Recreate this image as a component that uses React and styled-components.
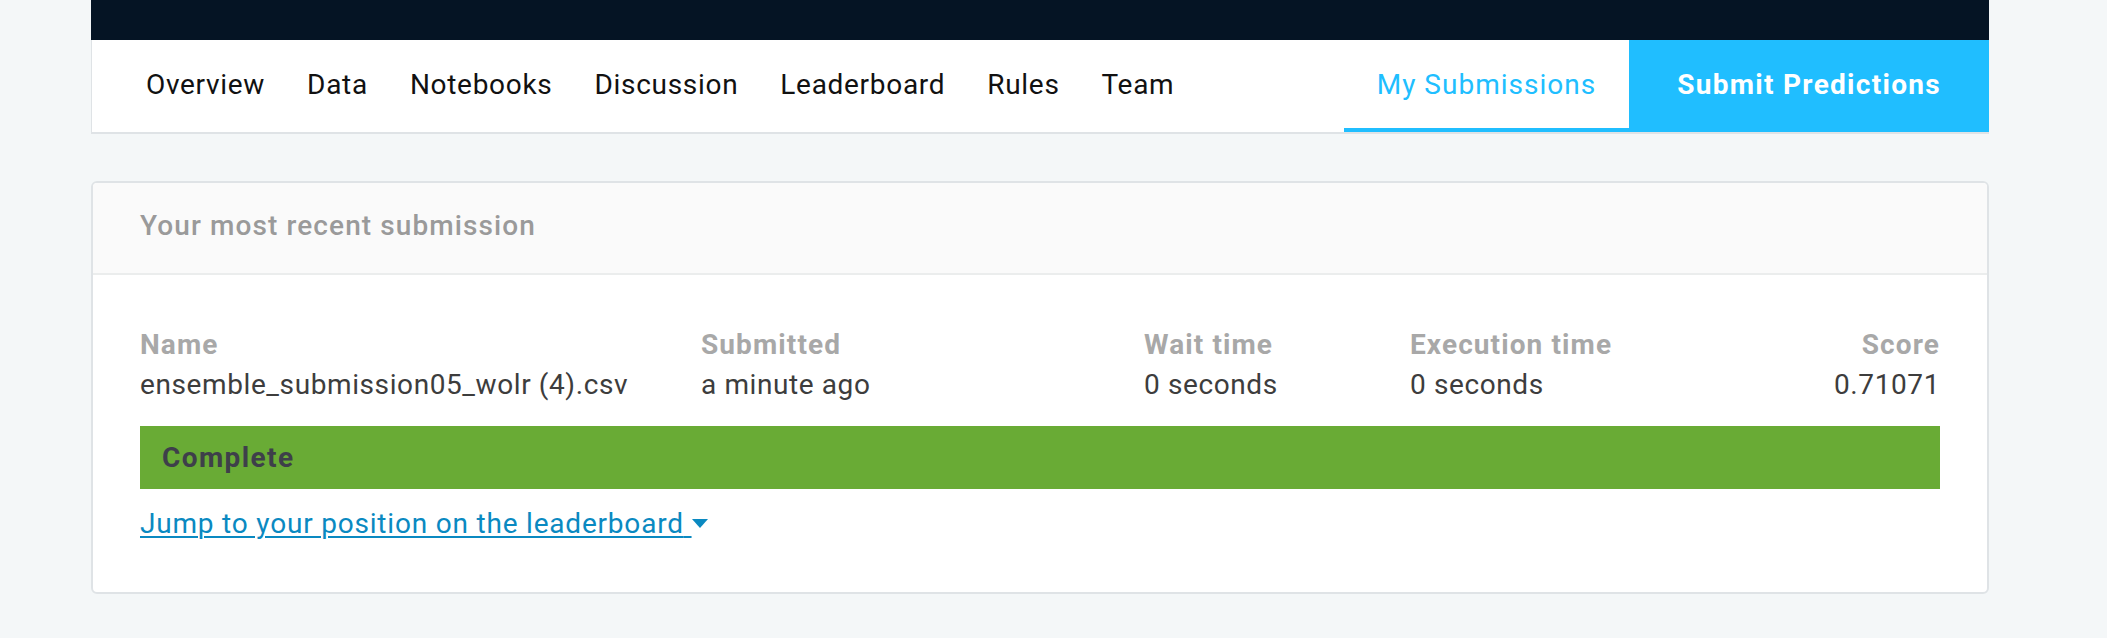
import React from 'react';
import styled, { createGlobalStyle } from 'styled-components';

const GlobalStyle = createGlobalStyle`
  body {
    margin: 0;
    background: #f4f7f8;
    font-family: Roboto, "Liberation Sans", sans-serif;
  }
`;

const Page = styled.div`
  margin-left: 91px;
  width: 1898px;
`;

const TopBar = styled.div`
  height: 40px;
  background: #051424;
`;

const Nav = styled.nav`
  display: flex;
  align-items: stretch;
  height: 94px;
  background: #fff;
  border-left: 1px solid #dfe3e6;
  border-bottom: 2px solid #dfe3e6;
  box-sizing: border-box;
  padding-left: 33px;
`;

const NavItem = styled.a`
  display: flex;
  align-items: center;
  padding: 0 21px 3px;
  font-size: 28px;
  letter-spacing: 0.7px;
  color: #111;
  text-decoration: none;
`;

const Spacer = styled.div`
  flex: 1;
`;

const Tab = styled.a`
  display: flex;
  align-items: center;
  padding: 0 33px;
  font-size: 28px;
  letter-spacing: 1px;
  color: #20beff;
  border-bottom: 4px solid #20beff;
  text-decoration: none;
`;

const SubmitButton = styled.a`
  display: flex;
  align-items: center;
  padding: 0 48px 3px;
  background: #20beff;
  color: #fff;
  font-size: 28px;
  font-weight: 700;
  letter-spacing: 1.3px;
  text-decoration: none;
`;

const Card = styled.section`
  margin-top: 47px;
  background: #fff;
  border: 2px solid #dfe3e6;
  border-radius: 6px;
  overflow: hidden;
`;

const CardHeader = styled.header`
  height: 92px;
  box-sizing: border-box;
  display: flex;
  align-items: center;
  padding: 0 47px 5px;
  background: #fafafa;
  border-bottom: 2px solid #ebeded;
  font-size: 28px;
  font-weight: 500;
  letter-spacing: 1.1px;
  color: #9a9a9a;
`;

const CardBody = styled.div`
  padding: 50px 47px 48px;
`;

const Table = styled.div`
  display: grid;
  grid-template-columns: 561px 443px 266px 1fr auto;
  line-height: 40px;
  font-size: 28px;
`;

const Label = styled.div`
  font-weight: 700;
  letter-spacing: 1.1px;
  color: #a8a8a8;
  text-align: ${p => (p.right ? 'right' : 'left')};
`;

const Value = styled.div`
  letter-spacing: 0.6px;
  color: #3d3d3d;
  text-align: ${p => (p.right ? 'right' : 'left')};
`;

const StatusBar = styled.div`
  margin-top: 21px;
  height: 63px;
  display: flex;
  align-items: center;
  padding: 0 22px;
  background: #69ab35;
  color: #3e3f4a;
  font-size: 28px;
  font-weight: 700;
  letter-spacing: 1.4px;
`;

const JumpLink = styled.a`
  display: inline-block;
  margin-top: 15px;
  line-height: 40px;
  font-size: 28px;
  letter-spacing: 0.8px;
  color: #0a89c1;
  text-decoration: underline;
  text-underline-offset: 3px;
  text-decoration-thickness: 2px;
`;

const Caret = styled.svg`
  display: inline-block;
  vertical-align: middle;
  margin-top: -4px;
`;

const columns = [
  { label: 'Name', value: 'ensemble_submission05_wolr (4).csv' },
  { label: 'Submitted', value: 'a minute ago' },
  { label: 'Wait time', value: '0 seconds' },
  { label: 'Execution time', value: '0 seconds' },
  { label: 'Score', value: '0.71071', right: true },
];

const navItems = ['Overview', 'Data', 'Notebooks', 'Discussion', 'Leaderboard', 'Rules', 'Team'];

export default function App() {
  return (
    <>
      <GlobalStyle />
      <Page>
        <TopBar />
        <Nav>
          {navItems.map(n => (
            <NavItem key={n}>{n}</NavItem>
          ))}
          <Spacer />
          <Tab>My Submissions</Tab>
          <SubmitButton>Submit Predictions</SubmitButton>
        </Nav>
        <Card>
          <CardHeader>Your most recent submission</CardHeader>
          <CardBody>
            <Table>
              {columns.map(c => (
                <Label key={c.label} right={c.right}>{c.label}</Label>
              ))}
              {columns.map(c => (
                <Value key={c.label} right={c.right}>{c.value}</Value>
              ))}
            </Table>
            <StatusBar>Complete</StatusBar>
            <JumpLink>
              Jump to your position on the leaderboard{'\u00a0'}
              <Caret width="16" height="9" viewBox="0 0 16 9">
                <path d="M0 0h16L8 9z" fill="#0a89c1" />
              </Caret>
            </JumpLink>
          </CardBody>
        </Card>
      </Page>
    </>
  );
}
